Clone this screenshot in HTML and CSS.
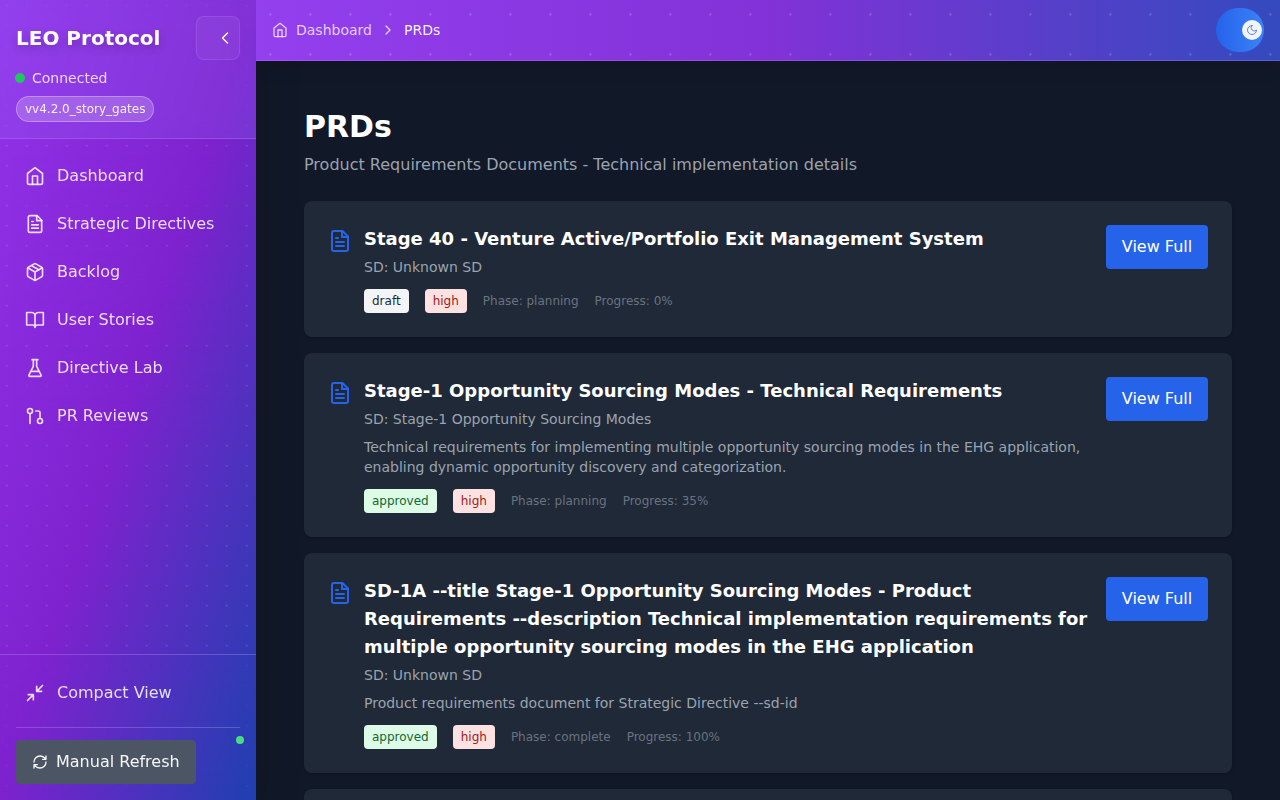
FILE: index.html
```html
<!DOCTYPE html>
<html lang="en">
<head>
<meta charset="utf-8">
<title>LEO Protocol</title>
<link rel="stylesheet" href="styles.css">
</head>
<body>
<svg class="defs" aria-hidden="true">
  <symbol id="home" viewBox="0 0 24 24"><path d="m3 9 9-7 9 7v11a2 2 0 0 1-2 2H5a2 2 0 0 1-2-2z"/><path d="M9 22V12h6v10"/></symbol>
  <symbol id="file" viewBox="0 0 24 24"><path d="M14.500 2H6a2 2 0 0 0-2 2v16a2 2 0 0 0 2 2h12a2 2 0 0 0 2-2V7.500L14.500 2z"/><path d="M14 2v6h6M16 13H8M16 17H8M10 9H8"/></symbol>
  <symbol id="package" viewBox="0 0 24 24"><path d="m16.500 9.400-9-5.190M21 16V8a2 2 0 0 0-1-1.730l-7-4a2 2 0 0 0-2 0l-7 4A2 2 0 0 0 3 8v8a2 2 0 0 0 1 1.730l7 4a2 2 0 0 0 2 0l7-4A2 2 0 0 0 21 16z"/><path d="M3.270 6.960 12 12.010l8.730-5.050M12 22.080V12"/></symbol>
  <symbol id="book" viewBox="0 0 24 24"><path d="M2 3h6a4 4 0 0 1 4 4v14a3 3 0 0 0-3-3H2zM22 3h-6a4 4 0 0 0-4 4v14a3 3 0 0 1 3-3h7z"/></symbol>
  <symbol id="flask" viewBox="0 0 24 24"><path d="M10 2v7.527a2 2 0 0 1-.211.896L4.720 20.550a1 1 0 0 0 .9 1.450h12.760a1 1 0 0 0 .9-1.450l-5.069-10.127A2 2 0 0 1 14 9.527V2M8.500 2h7M7 16h10"/></symbol>
  <symbol id="pull" viewBox="0 0 24 24"><circle cx="18" cy="18" r="3"/><circle cx="6" cy="6" r="3"/><path d="M13 6h3a2 2 0 0 1 2 2v7M6 9v12"/></symbol>
  <symbol id="minimize" viewBox="0 0 24 24"><path d="M4 14h6v6M20 10h-6V4M14 10l7-7M3 21l7-7"/></symbol>
  <symbol id="refresh" viewBox="0 0 24 24"><path d="M3 12a9 9 0 0 1 9-9 9.750 9.750 0 0 1 6.740 2.740L21 8M21 3v5h-5M21 12a9 9 0 0 1-9 9 9.750 9.750 0 0 1-6.740-2.740L3 16M8 16H3v5"/></symbol>
  <symbol id="left" viewBox="0 0 24 24"><path d="m15 18-6-6 6-6"/></symbol>
  <symbol id="right" viewBox="0 0 24 24"><path d="m9 18 6-6-6-6"/></symbol>
  <symbol id="moon" viewBox="0 0 24 24"><path d="M12 3a6 6 0 0 0 9 9 9 9 0 1 1-9-9Z"/></symbol>
</svg>
<div class="app">
  <aside class="sidebar">
    <header class="brand">
      <div class="brand-row"><h1>LEO Protocol</h1><button class="collapse"><svg class="icon i20"><use href="#left"/></svg></button></div>
      <div class="status"><span class="status-dot"></span>Connected</div>
      <span class="version">vv4.2.0_story_gates</span>
    </header>
    <nav class="nav">
      <a class="nav-item"><svg class="icon i20"><use href="#home"/></svg>Dashboard</a>
      <a class="nav-item"><svg class="icon i20"><use href="#file"/></svg>Strategic Directives</a>
      <a class="nav-item"><svg class="icon i20"><use href="#package"/></svg>Backlog</a>
      <a class="nav-item"><svg class="icon i20"><use href="#book"/></svg>User Stories</a>
      <a class="nav-item"><svg class="icon i20"><use href="#flask"/></svg>Directive Lab</a>
      <a class="nav-item"><svg class="icon i20"><use href="#pull"/></svg>PR Reviews</a>
    </nav>
    <footer class="side-footer">
      <a class="compact"><svg class="icon i20"><use href="#minimize"/></svg>Compact View</a>
      <div class="refresh-row">
        <button class="refresh"><svg class="icon i16"><use href="#refresh"/></svg>Manual Refresh</button>
        <span class="live-dot"></span>
      </div>
    </footer>
  </aside>
  <div class="content">
    <header class="topbar">
      <div class="crumbs"><svg class="icon i16"><use href="#home"/></svg><span>Dashboard</span><svg class="icon i16"><use href="#right"/></svg><span class="current">PRDs</span></div>
      <button class="theme"><span class="knob"><svg class="icon i12"><use href="#moon"/></svg></span></button>
    </header>
    <main class="main">
      <h2 class="title">PRDs</h2>
      <p class="subtitle">Product Requirements Documents - Technical implementation details</p>
      <div class="cards">
        <article class="card">
          <svg class="icon i24 doc"><use href="#file"/></svg>
          <div class="body">
            <h3>Stage 40 - Venture Active/Portfolio Exit Management System</h3>
            <p class="sd">SD: Unknown SD</p>
            <div class="meta"><span class="tag draft">draft</span><span class="tag high">high</span><span>Phase: planning</span><span>Progress: 0%</span></div>
          </div>
          <button class="view">View Full</button>
        </article>
        <article class="card">
          <svg class="icon i24 doc"><use href="#file"/></svg>
          <div class="body">
            <h3>Stage-1 Opportunity Sourcing Modes - Technical Requirements</h3>
            <p class="sd">SD: Stage-1 Opportunity Sourcing Modes</p>
            <p class="desc">Technical requirements for implementing multiple opportunity sourcing modes in the EHG application, enabling dynamic opportunity discovery and categorization.</p>
            <div class="meta"><span class="tag approved">approved</span><span class="tag high">high</span><span>Phase: planning</span><span>Progress: 35%</span></div>
          </div>
          <button class="view">View Full</button>
        </article>
        <article class="card">
          <svg class="icon i24 doc"><use href="#file"/></svg>
          <div class="body">
            <h3>SD-1A --title Stage-1 Opportunity Sourcing Modes - Product Requirements --description Technical implementation requirements for multiple opportunity sourcing modes in the EHG application</h3>
            <p class="sd">SD: Unknown SD</p>
            <p class="desc">Product requirements document for Strategic Directive --sd-id</p>
            <div class="meta"><span class="tag approved">approved</span><span class="tag high">high</span><span>Phase: complete</span><span>Progress: 100%</span></div>
          </div>
          <button class="view">View Full</button>
        </article>
        <article class="card next"></article>
      </div>
    </main>
  </div>
</div>
</body>
</html>
```

FILE: styles.css
```css
* { box-sizing: border-box; }
body, h1, h2, h3, p { margin: 0; }
body {
  height: 800px;
  overflow: hidden;
  background: #111827;
  color: #fff;
  font: 16px/24px "DejaVu Sans", sans-serif;
}
button { font: inherit; color: inherit; border: 0; padding: 0; }
.defs { position: absolute; width: 0; height: 0; }
.icon { flex: none; fill: none; stroke: currentColor; stroke-width: 2; stroke-linecap: round; stroke-linejoin: round; }
.i12 { width: 12px; height: 12px; }
.i16 { width: 16px; height: 16px; }
.i20 { width: 20px; height: 20px; }
.i24 { width: 24px; height: 24px; }

.app { display: flex; height: 800px; }

.sidebar {
  width: 256px;
  flex: none;
  display: flex;
  flex-direction: column;
  background:
    radial-gradient(circle at 6.7px 5.700px, rgba(255,255,255,.1) 0.700px, transparent 1.500px) 0 0 / 20px 20px,
    linear-gradient(to bottom right, #9333ea, #7e22ce, #1e40af);
  box-shadow: 0 25px 50px -12px rgba(0,0,0,.25);
}
.brand {
  height: 139px;
  padding: 16px;
  border-bottom: 1px solid rgba(192,160,255,.28);
  background: rgba(147,120,255,.18);
  backdrop-filter: blur(12px);
}
.brand-row { display: flex; align-items: center; justify-content: space-between; }
.brand h1 { font-size: 18.8px; font-size: 20px; line-height: 28px; letter-spacing: 0; text-shadow: 0 4px 8px rgba(0,0,0,.2); }
.collapse {
  width: 44px;
  height: 44px;
  padding-left: 14px;
  display: grid;
  place-items: center;
  border: 1px solid rgba(255,255,255,.1);
  border-radius: 8px;
  background: rgba(255,255,255,.05);
}
.collapse .icon { stroke-width: 1.7; }
.status { display: flex; align-items: center; gap: 8px; margin: 8px 0 8px -1px; font-size: 14px; line-height: 20px; color: rgba(255,255,255,.8); }
.status-dot { width: 10px; height: 10px; margin-right: -1px; border-radius: 50%; background: #22c55e; }
.version { display: block; width: max-content; height: 26px; padding: 4px 8px; border: 1px solid rgba(255,255,255,.3); border-radius: 13px; background: rgba(255,255,255,.2); font-size: 12px; line-height: 16px; color: rgba(255,255,255,.9); }
.nav { flex: 1; display: flex; flex-direction: column; gap: 6px; padding: 16px 12px; }
.nav-item, .compact { display: flex; align-items: center; gap: 12px; height: 42px; padding: 0 13px; color: rgba(255,255,255,.84); }
.nav-item { backdrop-filter: blur(8px); border-radius: 8px; }
.side-footer { height: 146px; padding: 16px; border-top: 1px solid rgba(192,160,255,.32); backdrop-filter: blur(12px); }
.compact { height: 44px; padding: 0 9px; }
.refresh-row { display: flex; justify-content: space-between; margin-top: 12px; padding-top: 12px; border-top: 1px solid rgba(192,160,255,.32); }
.refresh { display: flex; align-items: center; gap: 8px; width: 180px; height: 44px; padding: 0 16px; border-radius: 4px; background: #4b5563; color: rgba(255,255,255,.95); }
.live-dot { width: 8px; height: 8px; margin: -4px -4px 0 0; border-radius: 50%; background: #4ade80; }

.content { flex: 1; min-width: 0; display: flex; flex-direction: column; }
.topbar {
  height: 61px;
  flex: none;
  display: flex;
  align-items: center;
  justify-content: space-between;
  padding: 0 16px;
  border-bottom: 1px solid rgba(192,130,255,.32);
  background:
    radial-gradient(circle at 14.400px 14.400px, rgba(255,255,255,.2) 0.700px, transparent 1.600px) 0 0 / 40px 40px,
    linear-gradient(rgba(147,120,255,.18), rgba(147,120,255,.18)),
    linear-gradient(to right, #9333ea, #7e22ce, #1e40af);
  box-shadow: 0 10px 15px -3px rgba(0,0,0,.1);
}
.crumbs { display: flex; align-items: center; gap: 8px; font-size: 14px; line-height: 20px; color: rgba(255,255,255,.76); }
.crumbs .current { color: rgba(255,255,255,.95); }
.theme { width: 48px; height: 44px; padding-right: 2px; display: flex; align-items: center; justify-content: flex-end; border-radius: 24px; background: linear-gradient(to right, #2563eb, #3b82f6); }
.knob { width: 20px; height: 20px; display: grid; place-items: center; border-radius: 50%; background: #f3f4f6; color: #2563eb; }
.knob .icon { stroke-width: 1.5; }
.main { flex: 1; min-height: 0; overflow: hidden; padding: 48px 48px 0; }
.title { font-size: 30px; line-height: 36px; }
.subtitle { margin-top: 8px; color: #9ca3af; }
.cards { display: flex; flex-direction: column; gap: 16px; margin-top: 24px; }
.card { display: flex; align-items: flex-start; padding: 24px; border-radius: 8px; background: #1f2937; box-shadow: 0 1px 3px rgba(0,0,0,.2); }
.next { height: 136px; }
.doc { margin: 4px 12px 0 0; color: #2563eb; }
.body { flex: 1; min-width: 0; padding-right: 16px; }
.card h3 { font-size: 18px; line-height: 28px; }
.sd, .desc { font-size: 14px; line-height: 20px; color: #9ca3af; }
.sd { margin-top: 4px; }
.desc { margin-top: 8px; }
.meta { display: flex; align-items: center; gap: 16px; margin-top: 12px; font-size: 12px; line-height: 16px; color: #6b7280; }
.tag { padding: 4px 8px; border-radius: 4px; }
.draft { background: #f3f4f6; color: #1f2937; }
.high { background: #fee2e2; color: #991b1b; }
.approved { background: #dcfce7; color: #166534; }
.view { flex: none; width: 102px; height: 44px; border-radius: 4px; background: #2563eb; }
```
